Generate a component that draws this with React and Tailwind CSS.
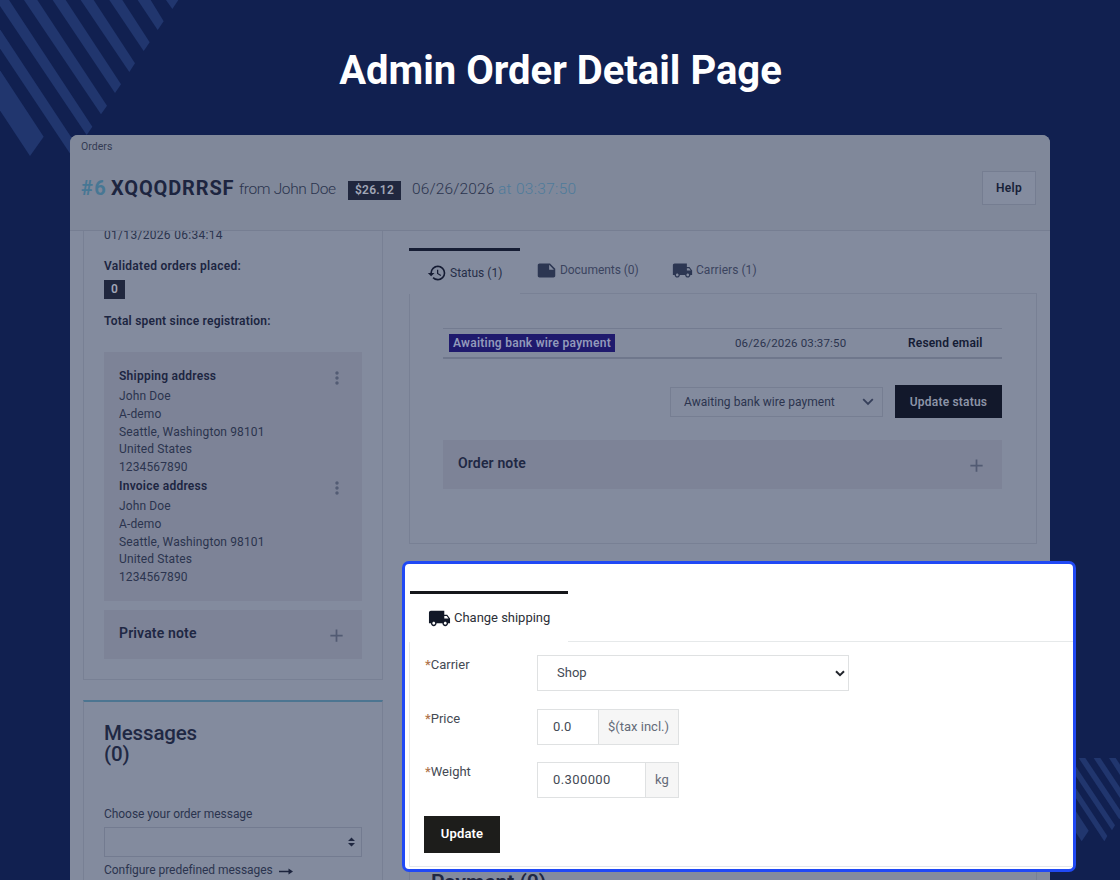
import { MdAdd, MdHistory, MdLocalShipping, MdMoreVert, MdNote } from 'react-icons/md';
import clsx from 'clsx';

const address = ['John Doe', 'A-demo', 'Seattle, Washington 98101', 'United States', '1234567890'];

function CornerStripes() {
  return (
    <svg className="absolute left-0 top-0" width="180" height="160" viewBox="0 0 540 480" fill="#21366e">
      <path d="M-218 0H-139L131 410L90 468Z" />
      <path d="M-97 0H-58L235 444L217 471Z" />
      <path d="M-12 0H27L277 380L260 405Z" />
      <path d="M72 0H112L321 317L303 343Z" />
      <path d="M158 0H197L363 253L345 279Z" />
      <path d="M242 0H281L405 190L388 216Z" />
      <path d="M328 0H367L449 127L431 153Z" />
      <path d="M413 0H452L491 64L473 90Z" />
      <path d="M498 0H535L517 27Z" />
    </svg>
  );
}

function SideStripes() {
  return (
    <svg className="absolute right-0 top-[758px]" width="50" height="84" viewBox="810 354 150 252" fill="#21366e">
      <path d="M680 354H723L866 572L845 604Z" />
      <path d="M748 354H768L922 588L913 604Z" />
      <path d="M791 354H811L945 556L936 571Z" />
      <path d="M836 354H856L968 522L958 538Z" />
      <path d="M881 354H901L990 488L980 504Z" />
      <path d="M927 354H947L1010 450L1000 466Z" />
    </svg>
  );
}

function PageHeader() {
  return (
    <header className="h-24 shrink-0 border-b border-[#767e92] bg-[#80889a] pl-[11px] pr-[14px]">
      <div className="h-[22px] text-[10.5px] leading-[24px] tracking-[0.05px] text-[#333b53]">Orders</div>
      <div className="flex justify-between pt-[14px]">
        <h1 className="flex h-[34px] items-center whitespace-nowrap">
          <span className="w-[30px] text-[20px] font-bold tracking-[1.3px] text-[#477794]">#6</span>
          <span className="w-[128px] text-[20px] font-bold tracking-[0.85px] text-[#1d2540]">XQQQDRRSF</span>
          <span className="mt-[4px] w-[109px] text-[15.5px] font-light tracking-[-0.35px] text-[#2b344e]">from John Doe</span>
          <span className="mt-[4px] h-[19px] w-[53px] bg-[#20273e] text-center text-[12px] font-semibold leading-[19px] tracking-[0.2px] text-[#a0a6b6]">
            $26.12
          </span>
          <span className="ml-[11px] mt-[4px] w-[86px] text-[15.5px] font-light tracking-[0.15px] text-[#2b344e]">06/26/2026</span>
          <span className="mt-[4px] text-[15.5px] font-light tracking-[0.3px] text-[#4e7b9b]">at 03:37:50</span>
        </h1>
        <button className="h-[34px] w-[54px] border border-[#757d91] bg-[#848c9f] text-[12px] font-semibold tracking-[0.3px] text-[#171f38]">
          Help
        </button>
      </div>
    </header>
  );
}

function Address({ title }) {
  return (
    <div className="h-[110px]">
      <div className="flex h-[22px] items-center justify-between">
        <b className="text-[12px] font-semibold leading-[20px] tracking-[0.25px] text-[#1c2541]">{title}</b>
        <MdMoreVert className="mt-1 text-[#535c74]" size={20} />
      </div>
      {address.map((line) => (
        <div key={line} className="h-[17.8px] text-[12px] leading-[19px] tracking-[0.12px]">{line}</div>
      ))}
    </div>
  );
}

function Note({ title, className }) {
  return (
    <div className={clsx('flex justify-between bg-[#7d8397] px-[15px]', className)}>
      <b className="mt-[13px] text-[14px] font-semibold leading-[20px] tracking-[0.15px] text-[#1f2844]">{title}</b>
      <MdAdd className="mt-[15px] text-[#525b73]" size={21} />
    </div>
  );
}

function CustomerColumn() {
  return (
    <div className="w-[300px] shrink-0">
      <section className="h-[449px] border border-t-0 border-[#788094] px-[20px]">
        <div className="flex h-[13px] items-end leading-[17px] tracking-[0.3px]">01/13/2026 06:34:14</div>
        <div className="mt-[13px] text-[12px] font-semibold leading-[18px] tracking-[0.28px] text-[#1c2541]">Validated orders placed:</div>
        <div className="mt-[5px] h-[19px] w-[21px] bg-[#20273e] text-center text-[12px] font-semibold leading-[19px] text-[#a0a6b6]">0</div>
        <div className="mt-[13px] text-[12px] font-semibold leading-[18px] tracking-[0.22px] text-[#1c2541]">Total spent since registration:</div>
        <div className="mt-[22px] h-[249px] bg-[#7d8397] px-[15px] pt-[13px]">
          <Address title="Shipping address" />
          <Address title="Invoice address" />
        </div>
        <Note title="Private note" className="mt-[9px] h-[49px]" />
      </section>
      <section className="mt-5 h-[200px] border-x border-t-2 border-x-[#788094] border-t-[#4c7591] px-[20px]">
        <h2 className="pt-[21px] text-[20.5px] font-medium leading-[21px] tracking-[-0.15px] text-[#1f2844]">
          Messages
          <br />
          (0)
        </h2>
        <div className="mt-[39px] leading-[20px] tracking-[-0.05px]">Choose your order message</div>
        <div className="mt-[3px] flex h-[30px] items-center justify-end border border-[#737b90] pr-[6px]">
          <svg width="7" height="10" viewBox="0 0 7 10" fill="#1f2740">
            <path d="M3.5 0.4L7 4H0ZM3.5 9.6L0 6H7Z" />
          </svg>
        </div>
        <div className="mt-[4px] flex items-center leading-[19px] tracking-[-0.05px]">
          Configure predefined messages
          <svg className="ml-[6px] mt-px" width="14" height="7" viewBox="0 0 14 7" fill="#1c243d">
            <path d="M0 2.7H9.5V0.4L14 3.5L9.5 6.6V4.3H0Z" />
          </svg>
        </div>
      </section>
    </div>
  );
}

function OrderColumn() {
  return (
    <div className="ml-[26px] w-[628px] shrink-0 pt-[17px]">
      <div className="flex h-[46px]">
        <div className="-mb-px flex h-[46px] w-[111px] items-center border-t-[3px] border-[#161d34] pl-[18px] text-[#262e48]">
          <MdHistory size={20} className="mr-[3px] text-[#141b33]" />
          <span>Status (1)</span>
        </div>
        <div className="flex w-[517px] items-center border-b border-[#798195] pb-px pl-[16px] text-[#3b445e]">
          <MdNote size={21} className="mr-[3px] text-[#2c3652]" />
          <span className="w-[112px] tracking-[-0.05px]">Documents (0)</span>
          <MdLocalShipping size={21} className="mr-[3px] text-[#2c3652]" />
          <span className="tracking-[0.05px]">Carriers (1)</span>
        </div>
      </div>
      <section className="h-[250px] border border-t-0 border-[#788094] pl-[33px] pr-[34px] pt-[34px]">
        <div className="flex h-[31px] items-center whitespace-nowrap border-b-2 border-t border-b-[#6f778c] border-t-[#737b90] pl-[6px]">
          <span className="h-[18px] w-[166px] bg-[#1f1a6d] text-center font-semibold leading-[18px] tracking-[0.25px] text-[#9299ba]">
            Awaiting bank wire payment
          </span>
          <span className="ml-[120px] w-[173px] pt-px text-[11.5px] tracking-[0.15px]">06/26/2026 03:37:50</span>
          <b className="font-semibold tracking-[0.15px] text-[#141c35]">Resend email</b>
        </div>
        <div className="mt-[26px] flex items-center justify-end">
          <div className="flex h-[30px] w-[213px] items-center justify-between border border-[#767e92] pl-[13px] pr-[8px]">
            <span className="tracking-[0.04px]">Awaiting bank wire payment</span>
            <svg width="12" height="8" viewBox="0 0 12 8" fill="none" stroke="#353f5a" strokeWidth="1.8">
              <path d="M1.2 1.2L6 6L10.8 1.2" />
            </svg>
          </div>
          <button className="ml-3 h-[33px] w-[107px] bg-[#12182b] font-semibold tracking-[0.2px] text-[#8c93a6]">Update status</button>
        </div>
        <Note title="Order note" className="mt-[22px] h-[49px]" />
      </section>
      <section className="mt-[17px] h-[320px] border border-[#788094] px-[21px] pt-[308px]">
        <h2 className="text-[21px] font-semibold leading-6 text-[#1f2844]">Payment (0)</h2>
      </section>
    </div>
  );
}

function Field({ label, children }) {
  return (
    <div className="flex h-[53.6px]">
      <label className="w-[112px] pt-px text-[13px] leading-[18px]">
        <span className="font-medium text-[#b0764e]">*</span>
        {label}
      </label>
      {children}
    </div>
  );
}

function ChangeShipping() {
  return (
    <section className="absolute left-[402px] top-[561px] h-[311px] w-[674px] rounded-[7px] border-[3px] border-[#2049f5] bg-white pl-1 pt-[27px] text-[13px] text-[#444a54]">
      <div className="flex h-[51px] pl-px">
        <div className="flex w-[158px] items-center border-t-[3px] border-[#16171b] pl-[18px] text-[#2c3038]">
          <MdLocalShipping size={23} className="mr-[3px] text-[#111827]" />
          <span className="tracking-[-0.02px]">Change shipping</span>
        </div>
        <div className="grow border-b border-[#e6e9ea]" />
      </div>
      <div className="h-[225px] border-b border-l border-[#e6e9ea] pl-[15px] pt-[13px]">
        <Field label="Carrier">
          <div className="flex h-[36px] w-[312px] items-center justify-between border border-[#dfe1e2] pl-[19px] pr-[3px]">
            Shop
            <svg width="10" height="7" viewBox="0 0 10 7" fill="none" stroke="#22252c" strokeWidth="2">
              <path d="M1 1.3L5 5.2L9 1.3" />
            </svg>
          </div>
        </Field>
        <Field label="Price">
          <div className="flex h-[36px] w-[142px] border border-[#dfe1e2] leading-[34px]">
            <span className="w-[61px] border-r border-[#dfe1e2] pl-[15px] tracking-[0.1px]">0.0</span>
            <span className="grow bg-[#f6f6f6] text-center text-[#646b78]">$(tax incl.)</span>
          </div>
        </Field>
        <Field label="Weight">
          <div className="flex h-[36px] w-[142px] border border-[#dfe1e2] leading-[34px]">
            <span className="w-[108px] border-r border-[#dfe1e2] pl-[15px] tracking-[0.4px]">0.300000</span>
            <span className="grow bg-[#f6f6f6] text-center text-[#646b78]">kg</span>
          </div>
        </Field>
        <button className="-ml-px h-[37px] w-[76px] bg-[#1d1d1b] pb-px font-semibold tracking-[0.15px] text-white">Update</button>
      </div>
    </section>
  );
}

export default function App() {
  return (
    <div className="relative flex h-[880px] w-[1120px] flex-col items-center overflow-hidden bg-[#112050] font-[Roboto,sans-serif]">
      <CornerStripes />
      <SideStripes />
      <h1 className="h-[135px] shrink-0 pl-px pt-[47px] text-[40px] font-bold leading-[48px] text-white">Admin Order Detail Page</h1>
      <main className="relative flex h-[745px] w-[980px] shrink-0 flex-col overflow-hidden rounded-t-[8px] bg-[#838b9e] text-[12px] text-[#2b344e]">
        <PageHeader />
        <div className="flex h-[649px] shrink-0 overflow-hidden pl-[13px]">
          <CustomerColumn />
          <OrderColumn />
        </div>
      </main>
      <ChangeShipping />
    </div>
  );
}
